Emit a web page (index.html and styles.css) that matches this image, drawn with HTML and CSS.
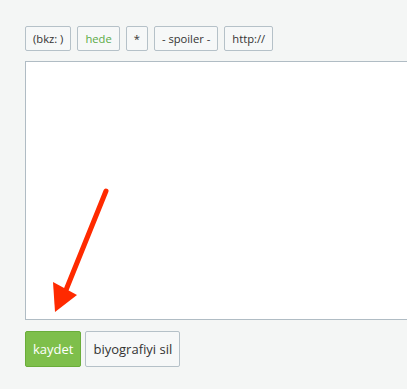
FILE: index.html
```html
<!DOCTYPE html>
<html>
<head>
<meta charset="utf-8">
<link rel="stylesheet" href="styles.css">
</head>
<body>
<div class="editor">
  <div class="toolbar">
    <button class="tool">(bkz: )</button>
    <button class="tool green">hede</button>
    <button class="tool">*</button>
    <button class="tool">- spoiler -</button>
    <button class="tool">http://</button>
  </div>
  <textarea class="text"></textarea>
  <div class="actions">
    <button class="btn primary">kaydet</button>
    <button class="btn">biyografiyi sil</button>
  </div>
</div>
<svg class="arrow" width="407" height="389" viewBox="0 0 407 389">
  <line x1="106" y1="191" x2="66" y2="290" stroke="#ff2a00" stroke-width="5" stroke-linecap="round"/>
  <polygon points="53,282 77,295 55,312" fill="#ff2a00"/>
</svg>
</body>
</html>
```
FILE: styles.css
```css
html, body { margin: 0; padding: 0; }
body {
  background: #f4f6f5;
  font-family: "Open Sans", sans-serif;
  width: 407px;
  height: 389px;
  overflow: hidden;
  position: relative;
}
.editor {
  padding: 26px 0 0 25px;
}
.toolbar {
  display: flex;
  gap: 6px;
  height: 25px;
}
.tool {
  font-family: "Open Sans", sans-serif;
  font-size: 11.2px;
  color: #333;
  background: #f6f8f8;
  border: 1px solid #b5c1c8;
  border-radius: 2px;
  padding: 0 7px;
  height: 25px;
  margin: 0;
}
.tool.green { color: #5aaa46; }
.text {
  display: block;
  margin-top: 10px;
  width: 400px;
  height: 259px;
  box-sizing: border-box;
  border: 1px solid #b0bcc4;
  border-right: none;
  background: #fff;
  resize: none;
  padding: 0;
}
.actions {
  display: flex;
  gap: 4px;
  margin-top: 11px;
}
.btn {
  font-family: "Open Sans", sans-serif;
  font-size: 13px;
  color: #333;
  background: #f6f8f8;
  border: 1px solid #b5c1c8;
  border-radius: 2px;
  height: 36px;
  padding: 0 7px;
  margin: 0;
}
.btn.primary {
  background: #7ebf4b;
  border-color: #6aad3a;
  color: #fff;
}
.arrow {
  position: absolute;
  left: 0;
  top: 0;
  pointer-events: none;
}
```
